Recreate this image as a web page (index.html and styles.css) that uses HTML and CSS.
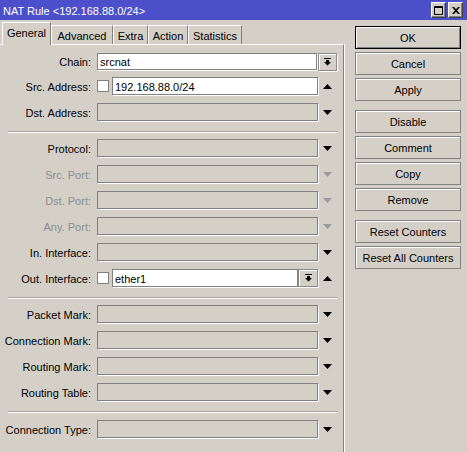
FILE: index.html
```html
<!DOCTYPE html>
<html>
<head>
<meta charset="utf-8">
<title>NAT Rule</title>
<link rel="stylesheet" href="styles.css">
</head>
<body>
<div class="titlebar">
  <div class="title">NAT Rule &lt;192.168.88.0/24&gt;</div>
  <div class="winbtns">
    <div class="wb"><svg width="9" height="9" viewBox="0 0 9 9"><path d="M0.5 0.5h8v8h-8z M0.5 1.5h8" fill="none" stroke="#000" stroke-width="1"/></svg></div>
    <div class="wb"><svg width="8" height="7" viewBox="0 0 8 7"><path d="M0 0h2l2 2.2L6 0h2L5 3.5 8 7H6L4 4.8 2 7H0l3-3.5z" fill="#000"/></svg></div>
  </div>
</div>
<div class="main">
  <div class="tabctl">
    <div class="tabs">
      <div class="tab active w-general">General</div>
      <div class="tab w-advanced">Advanced</div>
      <div class="tab w-extra">Extra</div>
      <div class="tab w-action">Action</div>
      <div class="tab w-stats">Statistics</div>
    </div>
    <div class="panel">
      <div class="group">
        <div class="row short">
          <div class="lbl">Chain:</div>
          <div class="ctl wide">
            <div class="field on">srcnat</div>
            <div class="dd"><svg width="7" height="8" viewBox="0 0 7 8"><path d="M0 0h7v1H0z M2 2h3v2h2L3.5 7.5 0 4h2z" fill="#000"/></svg></div>
          </div>
        </div>
        <div class="row">
          <div class="lbl">Src. Address:</div>
          <div class="ctl">
            <div class="cb"></div>
            <div class="field on">192.168.88.0/24</div>
          </div>
          <div class="arrow"><svg width="9" height="5" viewBox="0 0 9 5"><polygon points="0,5 9,5 4.5,0"/></svg></div>
        </div>
        <div class="row">
          <div class="lbl">Dst. Address:</div>
          <div class="ctl"><div class="field"></div></div>
          <div class="arrow"><svg width="9" height="5" viewBox="0 0 9 5"><polygon points="0,0 9,0 4.5,5"/></svg></div>
        </div>
      </div>
      <div class="sep"></div>
      <div class="group">
        <div class="row">
          <div class="lbl">Protocol:</div>
          <div class="ctl"><div class="field"></div></div>
          <div class="arrow"><svg width="9" height="5" viewBox="0 0 9 5"><polygon points="0,0 9,0 4.5,5"/></svg></div>
        </div>
        <div class="row off">
          <div class="lbl">Src. Port:</div>
          <div class="ctl"><div class="field"></div></div>
          <div class="arrow"><svg width="9" height="5" viewBox="0 0 9 5"><polygon points="0,0 9,0 4.5,5"/></svg></div>
        </div>
        <div class="row off">
          <div class="lbl">Dst. Port:</div>
          <div class="ctl"><div class="field"></div></div>
          <div class="arrow"><svg width="9" height="5" viewBox="0 0 9 5"><polygon points="0,0 9,0 4.5,5"/></svg></div>
        </div>
        <div class="row off">
          <div class="lbl">Any. Port:</div>
          <div class="ctl"><div class="field"></div></div>
          <div class="arrow"><svg width="9" height="5" viewBox="0 0 9 5"><polygon points="0,0 9,0 4.5,5"/></svg></div>
        </div>
        <div class="row">
          <div class="lbl">In. Interface:</div>
          <div class="ctl"><div class="field"></div></div>
          <div class="arrow"><svg width="9" height="5" viewBox="0 0 9 5"><polygon points="0,0 9,0 4.5,5"/></svg></div>
        </div>
        <div class="row">
          <div class="lbl">Out. Interface:</div>
          <div class="ctl">
            <div class="cb"></div>
            <div class="field on">ether1</div>
            <div class="dd"><svg width="7" height="8" viewBox="0 0 7 8"><path d="M0 0h7v1H0z M2 2h3v2h2L3.5 7.5 0 4h2z" fill="#000"/></svg></div>
          </div>
          <div class="arrow"><svg width="9" height="5" viewBox="0 0 9 5"><polygon points="0,5 9,5 4.5,0"/></svg></div>
        </div>
      </div>
      <div class="sep"></div>
      <div class="group">
        <div class="row">
          <div class="lbl">Packet Mark:</div>
          <div class="ctl"><div class="field"></div></div>
          <div class="arrow"><svg width="9" height="5" viewBox="0 0 9 5"><polygon points="0,0 9,0 4.5,5"/></svg></div>
        </div>
        <div class="row">
          <div class="lbl">Connection Mark:</div>
          <div class="ctl"><div class="field"></div></div>
          <div class="arrow"><svg width="9" height="5" viewBox="0 0 9 5"><polygon points="0,0 9,0 4.5,5"/></svg></div>
        </div>
        <div class="row">
          <div class="lbl">Routing Mark:</div>
          <div class="ctl"><div class="field"></div></div>
          <div class="arrow"><svg width="9" height="5" viewBox="0 0 9 5"><polygon points="0,0 9,0 4.5,5"/></svg></div>
        </div>
        <div class="row">
          <div class="lbl">Routing Table:</div>
          <div class="ctl"><div class="field"></div></div>
          <div class="arrow"><svg width="9" height="5" viewBox="0 0 9 5"><polygon points="0,0 9,0 4.5,5"/></svg></div>
        </div>
      </div>
      <div class="sep last"></div>
      <div class="group">
        <div class="row">
          <div class="lbl">Connection Type:</div>
          <div class="ctl"><div class="field"></div></div>
          <div class="arrow"><svg width="9" height="5" viewBox="0 0 9 5"><polygon points="0,0 9,0 4.5,5"/></svg></div>
        </div>
      </div>
    </div>
  </div>
  <div class="btns">
    <div class="btn default">OK</div>
    <div class="btn">Cancel</div>
    <div class="btn">Apply</div>
    <div class="btn spaced">Disable</div>
    <div class="btn">Comment</div>
    <div class="btn">Copy</div>
    <div class="btn">Remove</div>
    <div class="btn spaced">Reset Counters</div>
    <div class="btn">Reset All Counters</div>
  </div>
</div>
</body>
</html>
```

FILE: styles.css
```css
* { box-sizing: border-box; }
html, body { margin: 0; padding: 0; }
body {
  width: 467px;
  height: 452px;
  overflow: hidden;
  background: #d4d0c8;
  font-family: "Liberation Sans", Arial, sans-serif;
  font-size: 11px;
  color: #000;
}

.titlebar {
  height: 20px;
  background: #4b4fca;
  color: #fff;
  display: flex;
  align-items: center;
  padding: 0 4px 0 3px;
}
.title { flex: 1; padding-top: 2px; font-size: 11px; }
.winbtns { display: flex; gap: 2px; }
.wb {
  width: 15px;
  height: 16px;
  background: #d4d0c8;
  border: 1px solid;
  border-color: #fff #404040 #404040 #fff;
  box-shadow: inset -1px -1px 0 #808080;
  display: flex;
  align-items: center;
  justify-content: center;
}

.main { display: flex; height: 432px; }

.tabctl { width: 345px; display: flex; flex-direction: column; }
.tabs {
  height: 24px;
  display: flex;
  align-items: flex-end;
  padding-left: 2px;
}
.tab {
  height: 19px;
  padding-top: 1px;
  border-top: 1px solid #fff;
  border-left: 1px solid #fff;
  border-right: 1px solid #808080;
  display: flex;
  align-items: center;
  justify-content: center;
  white-space: nowrap;
}
.tab.active {
  height: 23px;
  margin-bottom: -1px;
  position: relative;
  z-index: 1;
  background: #d4d0c8;
  align-items: flex-start;
  padding-top: 4px;
}
.w-general { width: 49px; }
.w-advanced { width: 62px; }
.w-extra { width: 35px; }
.w-action { width: 40px; }
.w-stats { width: 54px; }

.panel {
  flex: 1;
  width: 344px;
  border-top: 1px solid #fff;
  border-right: 1px solid #808080;
  box-shadow: 1px 0 0 #fff;
  padding-top: 8px;
}

.group { display: flex; flex-direction: column; gap: 8px; }
.row { display: flex; align-items: center; height: 18px; }
.row.short { height: 17px; margin-bottom: -1px; }
.row.short .ctl, .row.short .field { height: 17px; }
.lbl {
  width: 91px;
  margin-right: 6px;
  padding-top: 1px;
  text-align: right;
  white-space: nowrap;
}
.row.off .lbl { color: #8d8d8d; }
.ctl { width: 221px; height: 18px; display: flex; align-items: center; }
.ctl.wide { width: 240px; }
.field {
  flex: 1;
  height: 18px;
  border: 1px solid #808080;
  box-shadow: 1px 1px 0 #fff;
  background: #d4d0c8;
  padding: 1px 0 0 2px;
  display: flex;
  align-items: center;
  white-space: nowrap;
}
.field.on { background: #fff; }
.ctl.wide .field { margin-right: 1px; }
.cb {
  flex: none;
  width: 12px;
  height: 12px;
  border: 1px solid #808080;
  background: #fff;
  margin-right: 3px;
}
.dd {
  flex: none;
  width: 20px;
  height: 18px;
  border: 1px solid #8a8a8a;
  box-shadow: inset 1px 1px 0 #fff, 1px 1px 0 #fff;
  display: flex;
  align-items: center;
  justify-content: center;
}
.ctl.wide .dd { width: 19px; }
.arrow {
  width: 19px;
  display: flex;
  justify-content: center;
  align-items: center;
}
.arrow svg { fill: #000; display: block; }
.row.off .arrow svg { fill: #9a9a9a; }

.sep {
  height: 2px;
  margin: 10px 6px 6px 8px;
  border-top: 1px solid #aaa69e;
  border-bottom: 1px solid #fff;
}
.sep.last { margin-bottom: 7px; }

.btns {
  margin-left: 10px;
  padding-top: 6px;
  width: 106px;
  display: flex;
  flex-direction: column;
}
.btn {
  height: 23px;
  margin-bottom: 3px;
  border: 1px solid #808080;
  box-shadow: inset 1px 1px 0 #fff;
  display: flex;
  align-items: center;
  justify-content: center;
  white-space: nowrap;
}
.btn.default {
  border-color: #000;
  box-shadow: inset 1px 1px 0 #fff, inset -1px -1px 0 #808080;
}
.btn.spaced { margin-top: 6px; }
```
